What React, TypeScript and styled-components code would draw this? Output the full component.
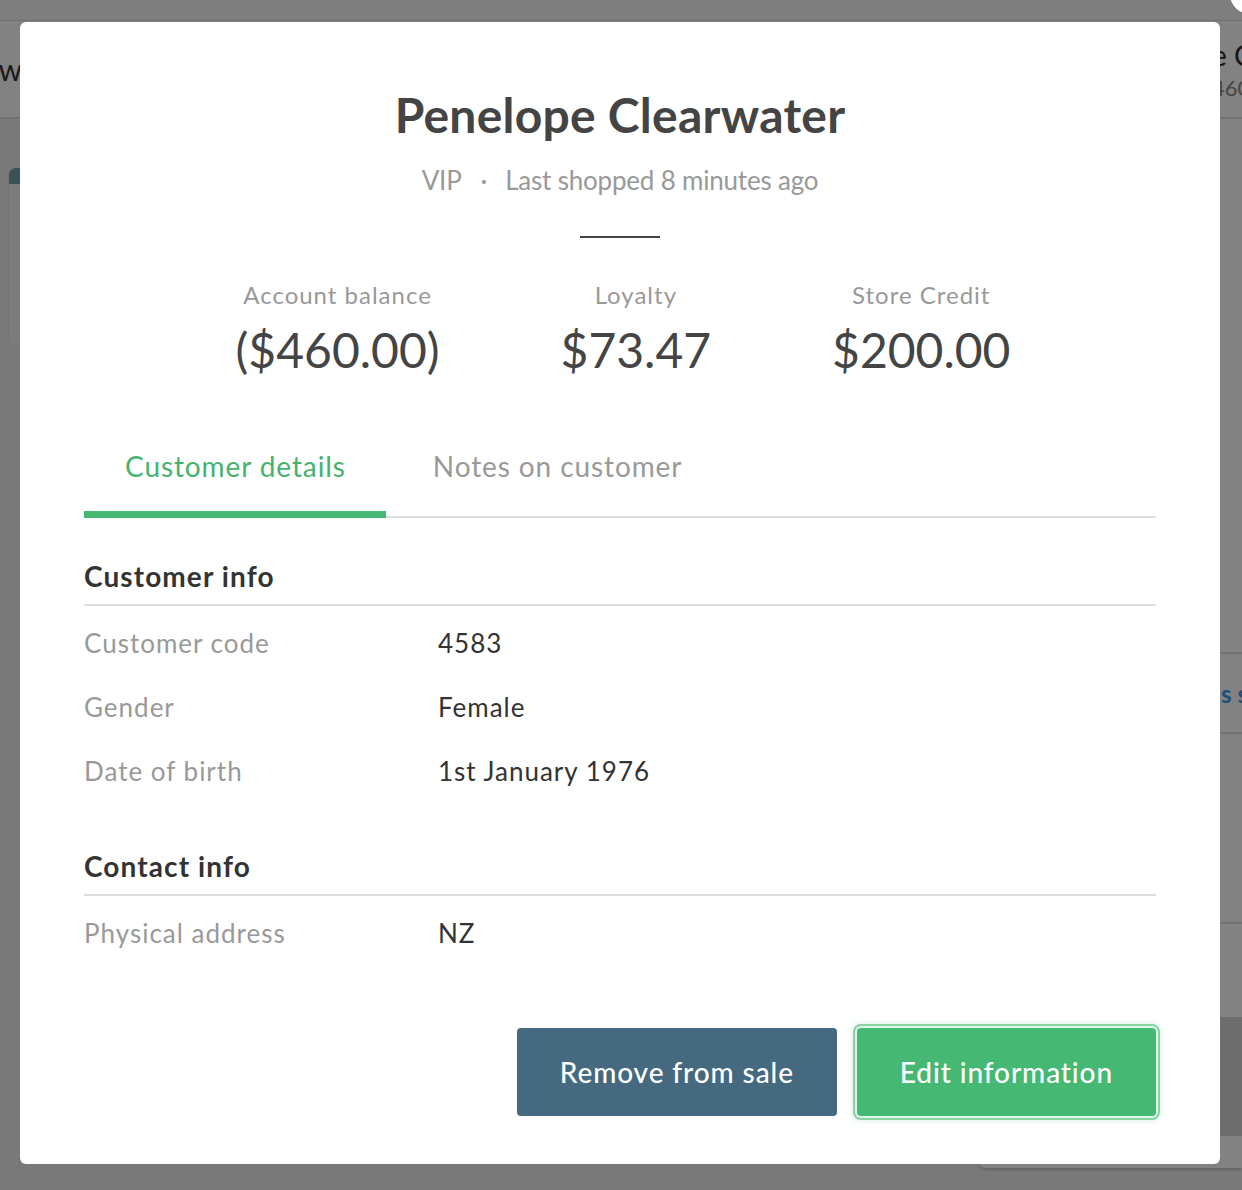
import React from 'react';
import styled, { createGlobalStyle } from 'styled-components';

const GlobalStyle = createGlobalStyle`
  html, body {
    margin: 0;
    padding: 0;
    width: 1242px;
    height: 1190px;
    overflow: hidden;
  }
  body {
    font-family: Lato, 'Liberation Sans', sans-serif;
    -webkit-font-smoothing: antialiased;
  }
  #root {
    width: 1242px;
    height: 1190px;
  }
  * { box-sizing: border-box; }
`;

/* ---------- background page (dimmed) ---------- */

const Screen = styled.div`
  position: relative;
  width: 1242px;
  height: 1190px;
  overflow: hidden;
  background: #ededed;
`;

const Page = styled.div`
  display: flex;
  flex-direction: column;
  height: 100%;
`;

const TopBar = styled.div`
  flex-shrink: 0;
  height: 21px;
  background: #f8f8f8;
  border-bottom: 1px solid #dcdcdc;
`;

const Header = styled.header`
  flex-shrink: 0;
  height: 98px;
  display: flex;
  align-items: center;
  background: #ffffff;
  border-bottom: 2px solid #dedede;
`;

const HeaderLeft = styled.div`
  width: 22px;
  overflow: hidden;
  display: flex;
  justify-content: flex-end;
  font-size: 30px;
  color: #333;
  white-space: nowrap;
`;

const HeaderSpacer = styled.div`
  flex: 1;
`;

const HeaderRight = styled.div`
  width: 30px;
  overflow: hidden;
  white-space: nowrap;
  display: flex;
  flex-direction: column;
  gap: 2px;
`;

const HeaderName = styled.span`
  font-size: 28px;
  color: #2a2a2a;
`;

const HeaderSub = styled.span`
  font-size: 22px;
  color: #888;
`;

const Body = styled.div`
  flex: 1;
  display: flex;
  justify-content: space-between;
`;

const LeftCard = styled.div`
  margin: 48px 0 0 8px;
  width: 300px;
  height: 180px;
  border-radius: 8px;
  background: #f4f4f4;
  border: 1px solid #e2e2e2;
  overflow: hidden;
`;

const LeftCardTop = styled.div`
  height: 16px;
  background: #72a0aa;
`;

const RightPanel = styled.div`
  width: 264px;
  margin-bottom: 22px;
  background: #ffffff;
  border-bottom-left-radius: 8px;
  box-shadow: 0 2px 3px rgba(0, 0, 0, 0.18);
  display: flex;
  flex-direction: column;
`;

const PanelBlank = styled.div<{ $h: number }>`
  height: ${(p) => p.$h}px;
  flex-shrink: 0;
`;

const PanelRow = styled.div<{ $h: number }>`
  height: ${(p) => p.$h}px;
  flex-shrink: 0;
  border-top: 2px solid #e0e0e0;
  display: flex;
  align-items: center;
  padding-left: 243px;
  white-space: nowrap;
  font-size: 24px;
  font-weight: 700;
  color: #3a9cf0;
`;

const PanelShade = styled.div`
  height: 119px;
  flex-shrink: 0;
  background: #d6d6d6;
`;

/* ---------- overlay & modal ---------- */

const Overlay = styled.div`
  position: absolute;
  inset: 0;
  background: rgba(0, 0, 0, 0.49);
  padding: 22px 0 0 20px;
`;

const Modal = styled.div`
  position: relative;
  width: 1200px;
  height: 1142px;
  background: #ffffff;
  border-radius: 6px;
  padding: 64px 64px 48px;
  display: flex;
  flex-direction: column;
`;

const CloseButton = styled.button`
  position: absolute;
  top: -48px;
  right: -50px;
  width: 40px;
  height: 40px;
  border: none;
  border-radius: 50%;
  background: #ffffff;
  padding: 0;
`;

const Title = styled.h1`
  margin: 0;
  font-size: 48px;
  line-height: 58px;
  font-weight: 700;
  letter-spacing: 0.25px;
  color: #444444;
  text-align: center;
`;

const Subtitle = styled.div`
  margin-top: 21px;
  font-size: 26px;
  line-height: 31px;
  letter-spacing: -0.2px;
  color: #999999;
  text-align: center;
`;

const Dot = styled.span`
  margin: 0 18px 0 19px;
`;

const Divider = styled.div`
  width: 80px;
  height: 2px;
  background: #444444;
  margin: 40px auto 0;
`;

const Stats = styled.div`
  margin-top: 42px;
  display: flex;
  justify-content: center;
  gap: 121px;
  padding-left: 6px;
`;

const Stat = styled.div`
  display: flex;
  flex-direction: column;
  align-items: center;
`;

const StatLabel = styled.div`
  font-size: 24px;
  line-height: 29px;
  letter-spacing: 1px;
  color: #999999;
`;

const StatValue = styled.div`
  margin-top: 12px;
  font-size: 48px;
  line-height: 58px;
  color: #444444;
`;

const Tabs = styled.div`
  margin-top: 70px;
  display: flex;
  gap: 6px;
  border-bottom: 2px solid #dddddd;
`;

const Tab = styled.div<{ $active?: boolean }>`
  padding: 0 40px 28px 41px;
  margin-bottom: -2px;
  font-size: 28px;
  line-height: 34px;
  letter-spacing: 0.9px;
  color: ${(p) => (p.$active ? '#45b36f' : '#999999')};
  border-bottom: 7px solid ${(p) => (p.$active ? '#45b873' : 'transparent')};
`;

const SectionTitle = styled.h2<{ $gap: number }>`
  margin: ${(p) => p.$gap}px 0 0;
  font-size: 28px;
  line-height: 34px;
  font-weight: 700;
  letter-spacing: 1.1px;
  color: #333333;
  padding-bottom: 11px;
  border-bottom: 2px solid #dddddd;
`;

const Rows = styled.div`
  padding-top: 5px;
`;

const Row = styled.div`
  display: grid;
  grid-template-columns: 354px 1fr;
  height: 64px;
  line-height: 64px;
  font-size: 26px;
  letter-spacing: 1px;
`;

const RowLabel = styled.span`
  color: #999999;
`;

const RowValue = styled.span`
  color: #333333;
`;

const Actions = styled.div`
  margin-top: auto;
  display: flex;
  justify-content: flex-end;
  gap: 20px;
`;

const Button = styled.button<{ $variant: 'secondary' | 'primary' }>`
  height: 88px;
  padding: 0 43px;
  border: none;
  border-radius: 4px;
  font-family: Lato, 'Liberation Sans', sans-serif;
  font-size: 28px;
  font-weight: 500;
  letter-spacing: 0.9px;
  color: #ffffff;
  background: ${(p) => (p.$variant === 'primary' ? '#45b873' : '#456a80')};
  box-shadow: ${(p) =>
    p.$variant === 'primary'
      ? '0 0 0 2px #e4f5ea, 0 0 0 4px #86d3a2, 0 0 6px 4px rgba(69, 184, 115, 0.25)'
      : 'none'};
`;

const details = [
  { label: 'Customer code', value: '4583' },
  { label: 'Gender', value: 'Female' },
  { label: 'Date of birth', value: '1st January 1976' },
];

const stats = [
  { label: 'Account balance', value: '($460.00)' },
  { label: 'Loyalty', value: '$73.47' },
  { label: 'Store Credit', value: '$200.00' },
];

export default function App() {
  return (
    <>
      <GlobalStyle />
      <Screen>
        <Page>
          <TopBar />
          <Header>
            <HeaderLeft>New</HeaderLeft>
            <HeaderSpacer />
            <HeaderRight>
              <HeaderName>e Clearwater</HeaderName>
              <HeaderSub>460 7123</HeaderSub>
            </HeaderRight>
          </Header>
          <Body>
            <LeftCard>
              <LeftCardTop />
            </LeftCard>
            <RightPanel>
              <PanelBlank $h={533} />
              <PanelRow $h={80}>s sales</PanelRow>
              <PanelRow $h={190} />
              <PanelRow $h={95} />
              <PanelShade />
            </RightPanel>
          </Body>
        </Page>
        <Overlay>
          <Modal>
            <CloseButton aria-label="Close" />
            <Title>Penelope Clearwater</Title>
            <Subtitle>
              <span>VIP</span>
              <Dot>·</Dot>
              <span>Last shopped 8 minutes ago</span>
            </Subtitle>
            <Divider />
            <Stats>
              {stats.map((s) => (
                <Stat key={s.label}>
                  <StatLabel>{s.label}</StatLabel>
                  <StatValue>{s.value}</StatValue>
                </Stat>
              ))}
            </Stats>
            <Tabs>
              <Tab $active>Customer details</Tab>
              <Tab>Notes on customer</Tab>
            </Tabs>
            <SectionTitle $gap={41}>Customer info</SectionTitle>
            <Rows>
              {details.map((d) => (
                <Row key={d.label}>
                  <RowLabel>{d.label}</RowLabel>
                  <RowValue>{d.value}</RowValue>
                </Row>
              ))}
            </Rows>
            <SectionTitle $gap={46}>Contact info</SectionTitle>
            <Rows>
              <Row>
                <RowLabel>Physical address</RowLabel>
                <RowValue>NZ</RowValue>
              </Row>
            </Rows>
            <Actions>
              <Button $variant="secondary">Remove from sale</Button>
              <Button $variant="primary">Edit information</Button>
            </Actions>
          </Modal>
        </Overlay>
      </Screen>
    </>
  );
}
